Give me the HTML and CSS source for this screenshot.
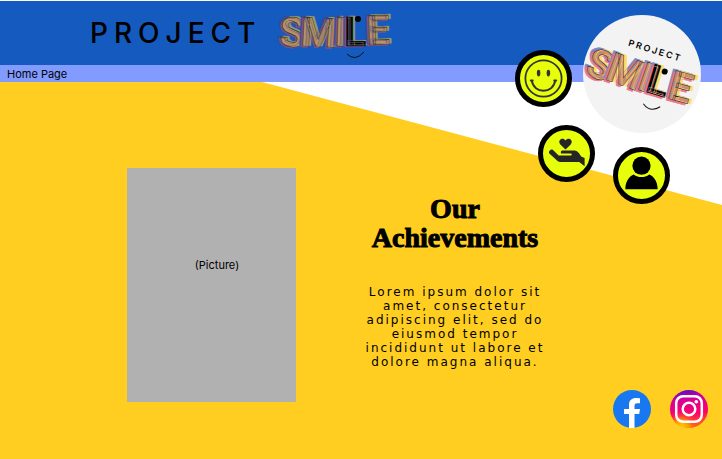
FILE: index.html
```html
<!DOCTYPE html>
<html lang="en">
<head>
<meta charset="utf-8">
<meta name="viewport" content="width=device-width, initial-scale=1">
<title>Project Smile</title>
<link rel="stylesheet" href="styles.css">
</head>
<body>
<header class="banner">
  <span class="brand">PROJECT</span>
  <svg class="wordmark" viewBox="0 0 120 56" role="img" aria-label="Smile">
    <g class="lettering lettering-muted">
      <text y="41 41 41 41 40" x="3 24 58 68 91" rotate="3 3 2 0 -2">SMI<tspan class="ink">L</tspan>E</text>
    </g>
    <circle cx="82" cy="14" r="3"/>
    <path class="grin" d="M71 49q8 8 17-2"/>
  </svg>
</header>
<nav class="crumbs"><a href="#home">Home Page</a></nav>
<main class="stage">
  <div class="content">
    <div class="picture">(Picture)</div>
    <section class="story">
      <h1>Our Achievements</h1>
      <p>Lorem ipsum dolor sit amet, consectetur adipiscing elit, sed do eiusmod tempor incididunt ut labore et dolore magna aliqua.</p>
    </section>
  </div>
  <footer class="social">
    <a href="#facebook" aria-label="Facebook">
      <svg viewBox="0 0 38 38"><circle cx="19" cy="19" r="19" fill="#1778f2"/><path fill="#fff" d="M16 38V24h-5v-5h5v-4c0-5 3-7 7-7 2 0 4 .3 4 .3v5h-2.500c-2.500 0-3 1.300-3 3V19H27l-.8 5H21.500v14z"/></svg>
    </a>
    <a href="#instagram" aria-label="Instagram">
      <svg viewBox="0 0 38 38">
        <defs>
          <linearGradient id="ig" x1=".35" y1="0" x2=".5" y2="1"><stop offset="0" stop-color="#5b0bc9"/><stop offset=".25" stop-color="#d6009a"/><stop offset=".65" stop-color="#ff0069"/><stop offset="1" stop-color="#ff7a00"/></linearGradient>
          <radialGradient id="glow" cx=".3" cy="1" r=".5"><stop offset="0" stop-color="#ffd600"/><stop offset=".4" stop-color="#ff9a00"/><stop offset="1" stop-color="#ff0069" stop-opacity="0"/></radialGradient>
        </defs>
        <circle cx="19" cy="19" r="19" fill="url(#ig)"/><circle cx="19" cy="19" r="19" fill="url(#glow)"/>
        <g fill="none" stroke="#fff" stroke-width="2.500"><rect x="6.200" y="6.200" width="25.600" height="25.600" rx="7"/><circle cx="19" cy="19" r="6.300"/></g><circle cx="26.300" cy="11.700" r="1.800" fill="#fff"/>
      </svg>
    </a>
  </footer>
</main>
<aside class="orbit">
  <a class="medallion" href="#home" aria-label="Project Smile home">
    <svg viewBox="0 0 118 118">
      <g transform="rotate(17 59 59)">
        <text class="mini-brand" x="37" y="36">PROJECT</text>
        <g class="lettering lettering-bright">
          <text x="3 24 57 66 89" y="76 75 75 75 75" rotate="3 3 2 0 -2">SMI<tspan class="ink">L</tspan>E</text>
        </g>
        <circle cx="80" cy="50" r="3"/>
        <path class="grin" d="M69 87q9 7 17-2"/>
      </g>
    </svg>
  </a>
  <a class="badge badge-smile" href="#smile" aria-label="Smile">
    <svg viewBox="0 0 48 48"><g fill="none" stroke="#333"><circle cx="24" cy="24" r="18.500" stroke-width="1.800"/><path stroke-width="2" stroke-linecap="round" d="M12 26c2 14 22 14 24 0M11 26h2M35 26h2"/></g><ellipse cx="19" cy="18.500" rx="1.800" ry="3.500" fill="#333"/><ellipse cx="29" cy="18.500" rx="1.800" ry="3.500" fill="#333"/></svg>
  </a>
  <a class="badge badge-give" href="#give" aria-label="Give">
    <svg viewBox="0 0 48 48"><g fill="#262626"><path d="M23 20l-5.300-5.300c-3.400-4 2.300-8 5.300-4 3-4 8.700 0 5.300 4z"/><path d="M7 21c1-1.600 3-1.200 4 .3l5 4.700h12c2 0 2-2 0-2h-9.500c-.8-2 .2-3 1.500-3h12c2 0 3.500 1 5 3l2 3 3.500 1.500V37L37 32.800H17.500c-1.500 0-2.500-.8-3.500-1.800l-7.500-7c-.7-.7-.5-2 .5-3z"/></g></svg>
  </a>
  <a class="badge badge-profile" href="#profile" aria-label="Profile">
    <svg viewBox="0 0 48 48"><circle cx="24" cy="14" r="9.300"/><path d="M7.500 38c0-7 3-12.500 8.500-15 5 3.500 11 3.500 16 0 5.500 2.500 8.500 8 8.500 15z"/></svg>
  </a>
</aside>
</body>
</html>
```
FILE: styles.css
```css
* { box-sizing: border-box; }
html { height: 100%; }
body {
  position: relative;
  display: flex;
  flex-direction: column;
  min-height: 100%;
  margin: 0;
  padding-top: 1px;
  background: #fff;
  color: #000;
  font: 11px/18px Inter, "Liberation Sans", sans-serif;
}
a { color: inherit; text-decoration: none; }
svg { display: block; width: 100%; height: 100%; overflow: visible; }

.banner {
  display: flex;
  align-items: center;
  gap: 15px;
  height: 64px;
  padding-left: 90px;
  background: #155abf;
}
.brand { font-size: 28px; line-height: 32px; font-weight: 500; letter-spacing: 6px; }
.banner .wordmark { width: 120px; height: 56px; }
.lettering {
  font: 700 41px Roboto, "Liberation Sans", sans-serif;
  stroke-width: 0.5px;
}
.lettering-muted { fill: #bf925c; stroke: #2e2528; text-shadow: 2px -1px #929e61, -2px 1px #80508d, -3px -1px #304da0; }
.lettering-bright { fill: #c8935f; stroke: #2d2430; text-shadow: 3px -1px #ffdc65, -2px 2px #ec7890, -3px -1px #7d86c5; }
.ink { fill: #000; stroke: #000; }
.grin { fill: none; stroke: #111; stroke-width: 1px; }

.crumbs {
  height: 17px;
  padding-left: 7px;
  background: #819bff;
}

.stage {
  position: relative;
  isolation: isolate;
  flex: 1;
  display: flex;
  flex-direction: column;
  justify-content: space-between;
  padding: 86px 14px 31px 127px;
}
.stage::before {
  content: "";
  position: absolute;
  z-index: -1;
  inset: 0;
  background: #ffce20;
  clip-path: polygon(0 0, 36.3% 0, 100% 32.6%, 100% 100%, 0 100%);
}
.content { display: flex; gap: 62px; }
.picture {
  flex: none;
  display: flex;
  justify-content: center;
  width: 169px;
  height: 234px;
  padding: 88px 0 0 11px;
  background: #b1b1b1;
}
.story { width: 194px; padding-top: 26px; text-align: center; }
h1 {
  margin: 0;
  font: 700 28px/29px "Liberation Serif", serif;
  -webkit-text-stroke: 1px #000;
}
p { margin: 33px 0 0; font: 12px/14px "DejaVu Sans", sans-serif; letter-spacing: 2px; }

.social { display: flex; justify-content: flex-end; gap: 19px; margin-top: -12px; }
.social a { width: 38px; height: 38px; }

.medallion, .badge { position: absolute; border-radius: 50%; }
.medallion { top: 15px; right: 21px; width: 118px; height: 118px; background: #f3f3f3; }
.mini-brand { font: 600 9px Inter, sans-serif; letter-spacing: 2px; }
.badge { width: 57px; height: 57px; border: 5px solid #000; background: #e8ff0c; }
.badge-smile { top: 50px; right: 150px; }
.badge-give { top: 125px; right: 127px; }
.badge-profile { top: 147px; right: 52px; }
```
